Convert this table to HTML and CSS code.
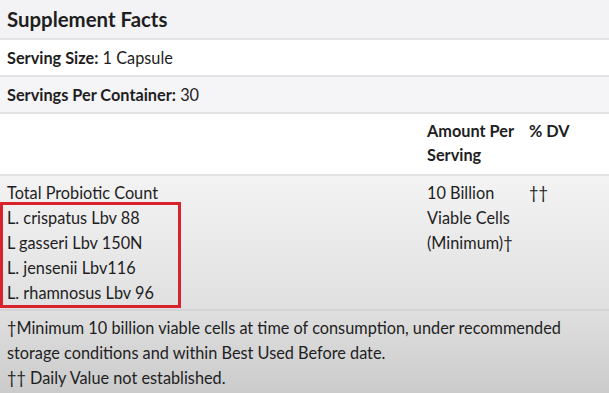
FILE: index.html
```html
<!DOCTYPE html>
<html lang="en">
<head>
  <meta charset="UTF-8" />
  <meta name="viewport" content="width=device-width, initial-scale=1.0"/>
  <title>Supplement Facts</title>
  <link rel="stylesheet" href="styles.css">
</head>
<body>
  <table class="facts">
    <colgroup>
      <col class="name-col">
      <col class="amount-col">
      <col>
    </colgroup>
    <tr class="title-row">
      <th colspan="3">Supplement Facts</th>
    </tr>
    <tr class="plain-row">
      <td colspan="3"><b>Serving Size:</b> 1 Capsule</td>
    </tr>
    <tr class="shaded-row">
      <td colspan="3"><b>Servings Per Container:</b> 30</td>
    </tr>
    <tr class="head-row">
      <td></td>
      <td class="amount"><b>Amount Per Serving</b></td>
      <td><b>% DV</b></td>
    </tr>
    <tr class="blend-row">
      <td>
        Total Probiotic Count
        <div class="strains">
          L. crispatus Lbv 88<br>
          L gasseri Lbv 150N<br>
          L. jensenii Lbv116<br>
          L. rhamnosus Lbv 96
        </div>
      </td>
      <td class="amount">10 Billion Viable Cells (Minimum)†</td>
      <td>††</td>
    </tr>
    <tr class="note-row">
      <td colspan="3">
        †Minimum 10 billion viable cells at time of consumption, under recommended storage conditions and within Best Used Before date.<br>
        †† Daily Value not established.
      </td>
    </tr>
  </table>
</body>
</html>
```

FILE: styles.css
```css
body {
  margin: 0;
  font-family: Lato, 'Open Sans', sans-serif;
  font-size: 16.3px;
  color: #1e1e1e;
  background: #cdcdce;
  overflow: hidden;
}

.facts {
  width: 100%;
  border-collapse: collapse;
  table-layout: fixed;
}

.name-col {
  width: 420px;
}

.amount-col {
  width: 102px;
}

.facts th,
.facts td {
  box-sizing: border-box;
  text-align: left;
  vertical-align: top;
  padding: 7px;
  line-height: 21px;
  border-bottom: 2px solid #e3e2e5;
}

.title-row th {
  font-size: 20.4px;
  line-height: 24px;
  background: #f3f2f5;
}

.plain-row td {
  background: #fff;
}

.shaded-row td {
  background: #f5f4f6;
}

.head-row td {
  background: #fff;
  line-height: 24px;
  padding: 5px 7px 7px;
}

.facts .amount {
  padding-right: 0;
}

.blend-row td {
  background: linear-gradient(#f3f3f4, #e0e0e1);
  line-height: 25px;
  padding: 4px 7px;
  border-bottom-color: #d4d4d6;
}

/* highlighted strain list, outline drawn outside the text box */
.strains {
  box-sizing: border-box;
  width: 175px;
  margin-left: -4px;
  padding-left: 4px;
  outline: 3px solid #d9232c;
}

.note-row td {
  background: linear-gradient(#dfdfe0, #cbcbcc);
  line-height: 25px;
  padding: 4px 7px;
  border-bottom: none;
}
```
